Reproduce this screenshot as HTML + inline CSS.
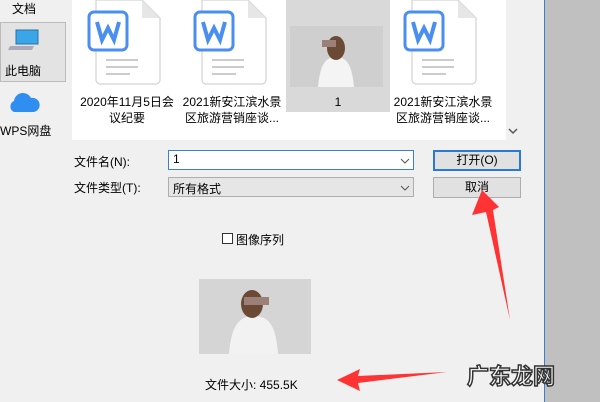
<!DOCTYPE html>
<html><head><meta charset="utf-8"><style>
*{margin:0;padding:0;box-sizing:border-box}
body{width:600px;height:402px;overflow:hidden;background:#f0f0f0;position:relative;font-family:"Liberation Sans","Noto Sans CJK SC",sans-serif;font-size:12px;color:#000}
.a{position:absolute}
.lbl{position:absolute;text-align:center;font-size:12px;line-height:16px;width:110px}
</style></head><body>
<div class="a" style="left:544px;top:0;width:56px;height:402px;background:#c0c0c0;border-left:1px solid #3b7fd0"></div>
<div class="a" style="left:72px;top:0;width:434px;height:140px;background:#fff"></div>
<div class="a" style="left:286px;top:0;width:104px;height:112px;background:#d9d9d9"></div>
<div class="a" style="left:0;top:22px;width:66px;height:60px;background:#e3e3e3;border:1px solid #bbb"></div>
<div class="a" style="left:12px;top:0;font-size:12px">文档</div>
<svg class="a" style="left:8px;top:28px" width="32" height="24"><rect x="8" y="2" width="22" height="14" fill="#3aa6e8" stroke="#2a6fa8"/><path d="M2 18h24l-2 4H0z" fill="#aab"/></svg>
<div class="a" style="left:5px;top:62px">此电脑</div>
<svg class="a" style="left:8px;top:92px" width="32" height="22"><path d="M6 20a6 6 0 0 1 0-11a9 9 0 0 1 17-3a7 7 0 0 1 3 14z" fill="#2f8ef0"/></svg>
<div class="a" style="left:0;top:122px">WPS网盘</div>

<svg class="a" style="left:86px;top:0" width="80" height="86"><path d="M10 0h46l18 18v62a4 4 0 0 1-4 4H14a4 4 0 0 1-4-4z" fill="#fff" stroke="#c8c8c8"/><path d="M56 0v18h18" fill="#e6e6e6"/><rect x="3" y="12" width="38" height="38" rx="5" fill="#fff" stroke="#4a8ef0" stroke-width="3"/><path d="M11 22l5 18l6-12l6 12l5-18" fill="none" stroke="#4a8ef0" stroke-width="4"/><path d="M20 60h32M20 67h32M20 74h24" stroke="#ccc" stroke-width="2"/></svg>
<svg class="a" style="left:192px;top:0" width="80" height="86"><path d="M10 0h46l18 18v62a4 4 0 0 1-4 4H14a4 4 0 0 1-4-4z" fill="#fff" stroke="#c8c8c8"/><path d="M56 0v18h18" fill="#e6e6e6"/><rect x="3" y="12" width="38" height="38" rx="5" fill="#fff" stroke="#4a8ef0" stroke-width="3"/><path d="M11 22l5 18l6-12l6 12l5-18" fill="none" stroke="#4a8ef0" stroke-width="4"/><path d="M20 60h32M20 67h32M20 74h24" stroke="#ccc" stroke-width="2"/></svg>
<svg class="a" style="left:402px;top:0" width="80" height="86"><path d="M10 0h46l18 18v62a4 4 0 0 1-4 4H14a4 4 0 0 1-4-4z" fill="#fff" stroke="#c8c8c8"/><path d="M56 0v18h18" fill="#e6e6e6"/><rect x="3" y="12" width="38" height="38" rx="5" fill="#fff" stroke="#4a8ef0" stroke-width="3"/><path d="M11 22l5 18l6-12l6 12l5-18" fill="none" stroke="#4a8ef0" stroke-width="4"/><path d="M20 60h32M20 67h32M20 74h24" stroke="#ccc" stroke-width="2"/></svg>
<svg class="a" style="left:290px;top:26px" width="93" height="61"><rect width="93" height="61" fill="#cfcfcf"/><path d="M28 61c2-20 6-30 18-30s16 10 18 30z" fill="#f4f4f4"/><ellipse cx="46" cy="22" rx="9" ry="12" fill="#6a4a35"/><rect x="32" y="14" width="14" height="7" fill="#9a8076"/></svg>
<div class="lbl" style="left:72px;top:94px">2020年11月5日会<br>议纪要</div>
<div class="lbl" style="left:177px;top:94px">2021新安江滨水景<br>区旅游营销座谈...</div>
<div class="lbl" style="left:283px;top:94px">1</div>
<div class="lbl" style="left:388px;top:94px">2021新安江滨水景<br>区旅游营销座谈...</div>
<svg class="a" style="left:508px;top:127px" width="10" height="8"><path d="M1 2l4 4l4-4" fill="none" stroke="#555" stroke-width="1.5"/></svg>

<div class="a" style="left:74px;top:153px">文件名(N):</div>
<div class="a" style="left:74px;top:179px">文件类型(T):</div>
<div class="a" style="left:168px;top:150px;width:246px;height:20px;background:#fff;border:1px solid #3b7fd0;padding:1px 4px">1</div>
<svg class="a" style="left:400px;top:157px" width="10" height="8"><path d="M1 2l4 4l4-4" fill="none" stroke="#555"/></svg>
<div class="a" style="left:168px;top:177px;width:246px;height:20px;background:#e6e6e6;border:1px solid #adadad;padding:2px 4px">所有格式</div>
<svg class="a" style="left:400px;top:184px" width="10" height="8"><path d="M1 2l4 4l4-4" fill="none" stroke="#555"/></svg>
<div class="a" style="left:433px;top:150px;width:88px;height:21px;background:#e1e1e1;border:2px solid #2a7ad5;text-align:center;line-height:17px">打开(O)</div>
<div class="a" style="left:433px;top:177px;width:88px;height:21px;background:#e1e1e1;border:1px solid #adadad;text-align:center;line-height:19px">取消</div>

<div class="a" style="left:222px;top:233px;width:11px;height:11px;border:1px solid #333;background:#fff"></div>
<div class="a" style="left:236px;top:231px">图像序列</div>
<svg class="a" style="left:199px;top:279px" width="112" height="75"><rect width="112" height="75" fill="#d5d5d5"/><path d="M30 75c2-25 8-38 25-38s22 13 24 38z" fill="#f2f2f2"/><ellipse cx="53" cy="25" rx="11" ry="14" fill="#6a4a35"/><rect x="45" y="18" width="25" height="8" fill="#9a8076"/></svg>
<div class="a" style="left:205px;top:376px;font-size:12px">文件大小: 455.5K</div>

<svg class="a" style="left:0;top:0" width="600" height="402"><path d="M482 190L472 215L486 212L510 320L493 210L499 207z" fill="#f33"/><path d="M337 380L360 369L358 376L447 372L358 383L360 391z" fill="#f33"/></svg>
<div class="a" style="left:467px;top:359px;font-size:22px;font-weight:bold;color:#fff;-webkit-text-stroke:1.5px #333">广东龙网</div>
</body></html>
